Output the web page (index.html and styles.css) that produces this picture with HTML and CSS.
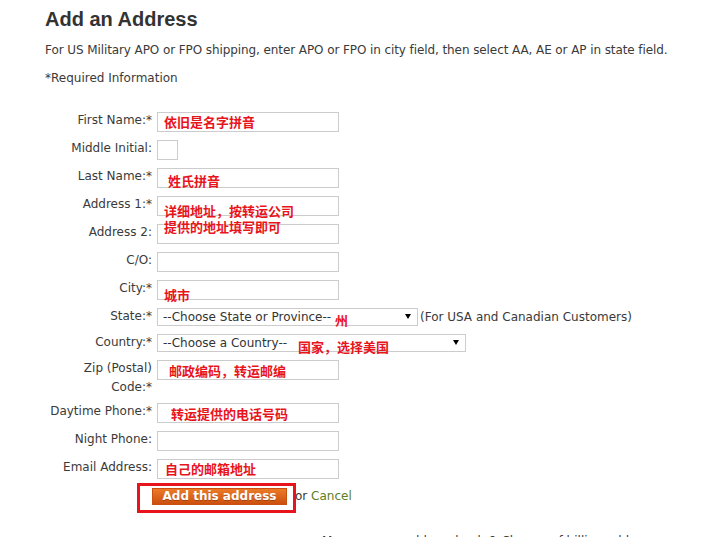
FILE: index.html
```html
<!DOCTYPE html>
<html lang="en">
<head>
<meta charset="utf-8">
<title>Add an Address</title>
<link rel="stylesheet" href="styles.css">
</head>
<body>
<div class="page">
  <h1 class="title">Add an Address</h1>
  <p class="note">For US Military APO or FPO shipping, enter APO or FPO in city field, then select AA, AE or AP in state field.</p>
  <p class="req">*Required Information</p>

  <form class="form">
    <div class="row">
      <label class="lbl">First Name:*</label>
      <div class="field"><input class="txt" type="text"><span class="anno a-first">依旧是名字拼音</span></div>
    </div>
    <div class="row">
      <label class="lbl">Middle Initial:</label>
      <div class="field"><input class="txt mini" type="text"></div>
    </div>
    <div class="row">
      <label class="lbl">Last Name:*</label>
      <div class="field"><input class="txt" type="text"><span class="anno a-last">姓氏拼音</span></div>
    </div>
    <div class="row">
      <label class="lbl">Address 1:*</label>
      <div class="field"><input class="txt" type="text"><span class="anno two a-addr">详细地址，按转运公司<br>提供的地址填写即可</span></div>
    </div>
    <div class="row">
      <label class="lbl">Address 2:</label>
      <div class="field"><input class="txt" type="text"></div>
    </div>
    <div class="row">
      <label class="lbl">C/O:</label>
      <div class="field"><input class="txt" type="text"></div>
    </div>
    <div class="row">
      <label class="lbl">City:*</label>
      <div class="field"><input class="txt" type="text"><span class="anno a-city">城市</span></div>
    </div>
    <div class="row">
      <label class="lbl">State:*</label>
      <div class="field">
        <span class="sel sel-state"><select><option>--Choose State or Province--</option></select></span>
        <span class="hint">(For USA and Canadian Customers)</span>
        <span class="anno a-state">州</span>
      </div>
    </div>
    <div class="row">
      <label class="lbl">Country:*</label>
      <div class="field">
        <span class="sel sel-country"><select><option>--Choose a Country--</option></select></span>
        <span class="anno a-country">国家，选择美国</span>
      </div>
    </div>
    <div class="row">
      <label class="lbl">Zip (Postal) Code:*</label>
      <div class="field"><input class="txt" type="text"><span class="anno a-zip">邮政编码，转运邮编</span></div>
    </div>
    <div class="row">
      <label class="lbl">Daytime Phone:*</label>
      <div class="field"><input class="txt" type="text"><span class="anno a-day">转运提供的电话号码</span></div>
    </div>
    <div class="row">
      <label class="lbl">Night Phone:</label>
      <div class="field"><input class="txt" type="text"></div>
    </div>
    <div class="row">
      <label class="lbl">Email Address:</label>
      <div class="field"><input class="txt" type="text"><span class="anno a-email">自己的邮箱地址</span></div>
    </div>
    <div class="actions">
      <span class="btn-wrap"><button type="button" class="btn">Add this address</button></span>
      <span class="or">or <a class="cancel" href="#">Cancel</a></span>
    </div>
  </form>

  <p class="foot">Manage your address book &amp; Change of billing address</p>
</div>
</body>
</html>
```

FILE: styles.css
```css
html, body {
  margin: 0;
  padding: 0;
  background: #fff;
}

body {
  font-family: "DejaVu Sans", Verdana, sans-serif;
  font-size: 12px;
  color: #3a3a3a;
}

.page {
  padding-left: 45px;
  overflow: hidden;
  height: 537px;
}

.title {
  margin: 8px 0 0;
  font-family: "Liberation Sans", Arial, sans-serif;
  font-size: 20px;
  line-height: 23px;
  font-weight: bold;
  color: #333;
}

.note {
  margin: 10px 0 0;
  line-height: 18px;
  letter-spacing: -0.09px;
}

.req {
  margin: 10px 0 0;
  line-height: 18px;
}

.form {
  margin-top: 25px;
}

.row {
  display: flex;
  align-items: flex-start;
  margin-bottom: 8px;
}

.lbl {
  width: 107px;
  flex: none;
  text-align: right;
  line-height: 19px;
  margin-top: -1px;
  margin-bottom: -2px;
  color: #3a3a3a;
}

.field {
  position: relative;
  margin-left: 5px;
  display: flex;
  align-items: center;
}

.txt {
  box-sizing: border-box;
  width: 182px;
  height: 20px;
  margin: 0;
  padding: 0 4px;
  border: 1px solid #cccccc;
  background: #fff;
  font: inherit;
  outline: none;
}

.txt.mini {
  width: 21px;
}

.sel {
  position: relative;
  display: inline-block;
}

.sel select {
  -webkit-appearance: none;
  appearance: none;
  box-sizing: border-box;
  height: 18px;
  margin: 0;
  padding: 0 0 0 5px;
  border: 1px solid #cccccc;
  border-radius: 0;
  background: #fff;
  font-family: inherit;
  font-size: 12px;
  color: #333;
  display: block;
}

.sel-state select {
  width: 261px;
}

.sel-country select {
  width: 309px;
}

.sel::after {
  content: "";
  position: absolute;
  top: 6px;
  right: 7px;
  border-left: 3px solid transparent;
  border-right: 3px solid transparent;
  border-top: 5px solid #000;
  pointer-events: none;
}

.hint {
  margin-left: 2px;
  line-height: 18px;
  color: #3a3a3a;
}

.anno {
  position: absolute;
  z-index: 5;
  white-space: nowrap;
  pointer-events: none;
  font-family: "Noto Sans CJK SC", sans-serif;
  font-weight: 700;
  font-size: 13px;
  line-height: 13px;
  color: #e8141c;
}

.anno.two {
  line-height: 16px;
}

.a-first { top: 3px; left: 7px; }
.a-last { top: 6px; left: 11px; }
.a-addr { top: 7px; left: 7px; }
.a-city { top: 8px; left: 7px; }
.a-state { top: 5px; left: 178px; }
.a-country { top: 6px; left: 141px; }
.a-zip { top: 4px; left: 12px; }
.a-day { top: 4px; left: 14px; }
.a-email { top: 3px; left: 8px; }

.actions {
  display: flex;
  align-items: center;
  padding-left: 107px;
}

.btn-wrap {
  position: relative;
  display: inline-block;
}

.btn-wrap::after {
  content: "";
  position: absolute;
  left: -15px;
  top: -5px;
  width: 153px;
  height: 24px;
  border: 3px solid #e8141c;
  pointer-events: none;
}

.btn {
  display: block;
  box-sizing: border-box;
  width: 135px;
  height: 17px;
  margin: 0;
  padding: 0;
  border: 1px solid #c9500f;
  border-radius: 0;
  background: linear-gradient(#ec7a28, #cc4f0e);
  font-family: "DejaVu Sans", Verdana, sans-serif;
  font-weight: bold;
  font-size: 12px;
  line-height: 15px;
  color: #fff;
  text-shadow: 0 1px 0 rgba(0, 0, 0, 0.25);
}

.or {
  margin-left: 8px;
  line-height: 18px;
  color: #3a3a3a;
}

.cancel {
  color: #5e7d22;
  text-decoration: none;
}

.foot {
  margin: 27px 0 0;
  padding-left: 277px;
  line-height: 18px;
  color: #3a3a3a;
  white-space: nowrap;
}
```
